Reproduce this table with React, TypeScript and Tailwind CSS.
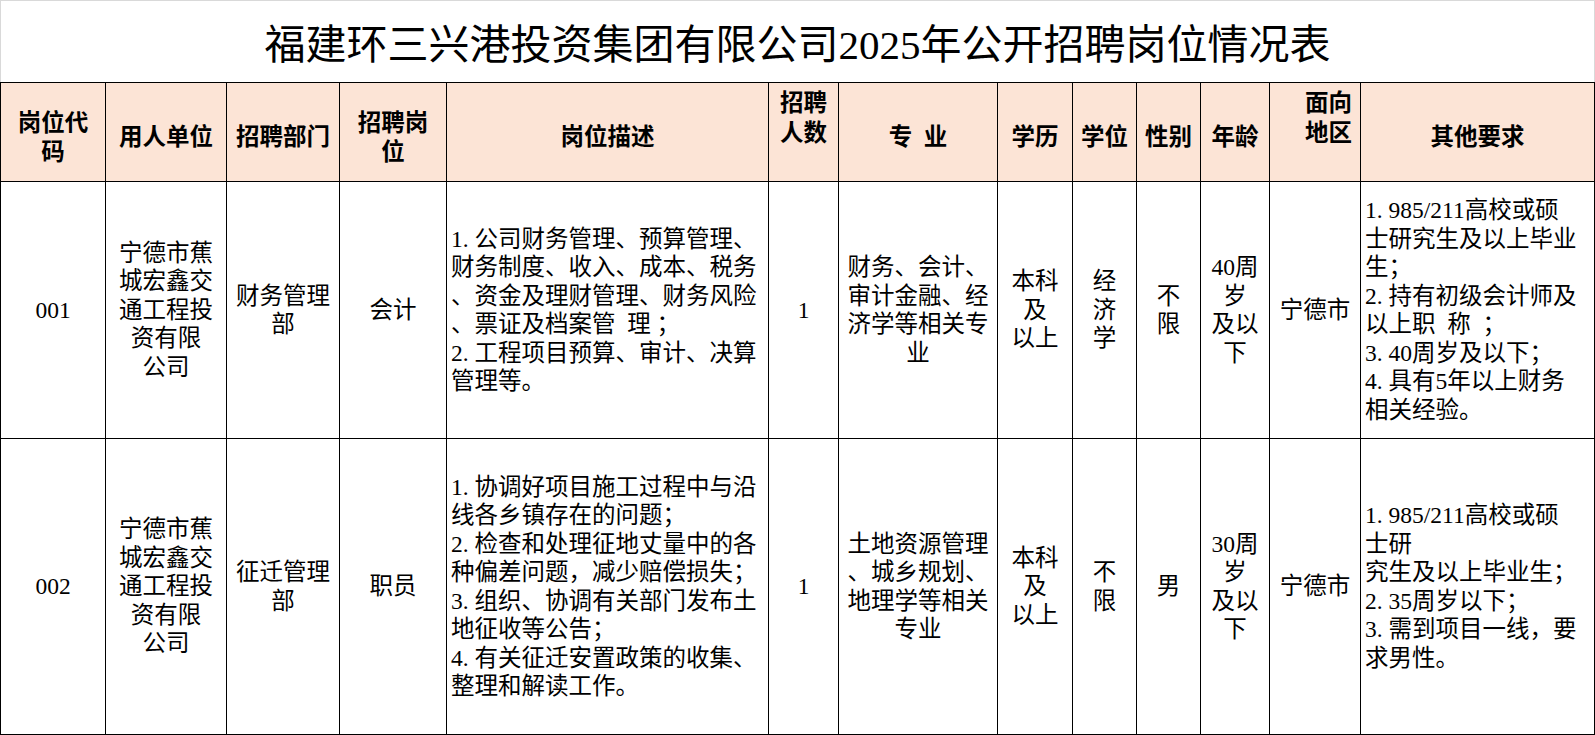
const FONT = "font-['Liberation_Serif','Noto_Sans_CJK_SC',serif]";

const COLS = [105, 121, 113, 107, 322, 70, 159, 75, 64, 64, 69, 91, 234];

// SimSun gives the period half an em; pad it out with a four-per-em space
const P = '.\u2005';

type Row = {
  code: string;
  unit: string;
  dept: string;
  post: string;
  desc: string;
  count: string;
  major: string;
  edu: string;
  degree: string;
  gender: string;
  age: string;
  area: string;
  other: string;
  height: string;
};

const ROWS: Row[] = [
  {
    code: '001',
    unit: '宁德市蕉\n城宏鑫交\n通工程投\n资有限\n公司',
    dept: '财务管理\n部',
    post: '会计',
    desc: `1${P}公司财务管理、预算管理、\n财务制度、收入、成本、税务\n、资金及理财管理、财务风险\n、票证及档案管  理 ；\n2${P}工程项目预算、审计、决算\n管理等。`,
    count: '1',
    major: '财务、会计、\n审计金融、经\n济学等相关专\n业',
    edu: '本科\n及\n以上',
    degree: '经\n济\n学',
    gender: '不\n限',
    age: '40周\n岁\n及以\n下',
    area: '宁德市',
    other: `1${P}985/211高校或硕\n士研究生及以上毕业\n生；\n2${P}持有初级会计师及\n以上职  称  ；\n3${P}40周岁及以下；\n4${P}具有5年以上财务\n相关经验。`,
    height: 'h-[257px]',
  },
  {
    code: '002',
    unit: '宁德市蕉\n城宏鑫交\n通工程投\n资有限\n公司',
    dept: '征迁管理\n部',
    post: '职员',
    desc: `1${P}协调好项目施工过程中与沿\n线各乡镇存在的问题；\n2${P}检查和处理征地丈量中的各\n种偏差问题，减少赔偿损失；\n3${P}组织、协调有关部门发布土\n地征收等公告；\n4${P}有关征迁安置政策的收集、\n整理和解读工作。`,
    count: '1',
    major: '土地资源管理\n、城乡规划、\n地理学等相关\n专业',
    edu: '本科\n及\n以上',
    degree: '不\n限',
    gender: '男',
    age: '30周\n岁\n及以\n下',
    area: '宁德市',
    other: `1${P}985/211高校或硕\n士研\n究生及以上毕业生；\n2${P}35周岁以下；\n3${P}需到项目一线，要\n求男性。`,
    height: 'h-[296px]',
  },
];

const cell = 'border border-black whitespace-pre-wrap align-middle px-1';

export default function App() {
  return (
    <div className={`w-[1595px] h-[735px] bg-white overflow-hidden ${FONT} text-black`}>
      <table className="table-fixed border-collapse w-[1594px]">
        <colgroup>
          {COLS.map((w, i) => (
            <col key={i} style={{ width: w }} />
          ))}
        </colgroup>
        <tbody>
          <tr className="h-[82px]">
            <td
              colSpan={13}
              className="border border-[#d9d9d9] border-b-black text-center align-middle pt-[8px] text-[41px] leading-none"
            >
              福建环三兴港投资集团有限公司2025年公开招聘岗位情况表
            </td>
          </tr>
          <tr className="h-[99px] bg-[#fce4d6] text-[23.5px] leading-[29.5px] font-bold">
            <td className={`${cell} text-center pt-[12px]`}>{'岗位代\n码'}</td>
            <td className={`${cell} text-center pt-[12px]`}>用人单位</td>
            <td className={`${cell} text-center pt-[12px]`}>招聘部门</td>
            <td className={`${cell} text-center pt-[12px]`}>{'招聘岗\n位'}</td>
            <td className={`${cell} text-center pt-[12px]`}>岗位描述</td>
            <td className={`${cell} text-center !align-top pt-[6px]`}>{'招聘\n人数'}</td>
            <td className={`${cell} text-center pt-[12px]`}>专  业</td>
            <td className={`${cell} text-center pt-[12px]`}>学历</td>
            <td className={`${cell} text-center pt-[12px]`}>学位</td>
            <td className={`${cell} text-center pt-[12px]`}>性别</td>
            <td className={`${cell} text-center pt-[12px]`}>年龄</td>
            <td className={`${cell} text-right !align-top pt-[6px] !pr-[8px]`}>{'面向\n地区'}</td>
            <td className={`${cell} text-center pt-[12px]`}>其他要求</td>
          </tr>
          {ROWS.map((r) => (
            <tr key={r.code} className={`${r.height} text-[23.5px] leading-[28.5px]`}>
              <td className={`${cell} text-center`}>{r.code}</td>
              <td className={`${cell} text-center`}>{r.unit}</td>
              <td className={`${cell} text-center`}>{r.dept}</td>
              <td className={`${cell} text-center`}>{r.post}</td>
              <td className={`${cell} text-left`}>{r.desc}</td>
              <td className={`${cell} text-center`}>{r.count}</td>
              <td className={`${cell} text-center`}>{r.major}</td>
              <td className={`${cell} text-center`}>{r.edu}</td>
              <td className={`${cell} text-center`}>{r.degree}</td>
              <td className={`${cell} text-center`}>{r.gender}</td>
              <td className={`${cell} text-center`}>{r.age}</td>
              <td className={`${cell} text-center`}>{r.area}</td>
              <td className={`${cell} text-left`}>{r.other}</td>
            </tr>
          ))}
        </tbody>
      </table>
    </div>
  );
}
